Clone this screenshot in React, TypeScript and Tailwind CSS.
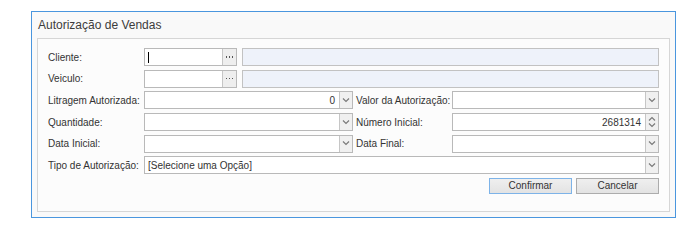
import React from "react";

const font = { fontFamily: '"Liberation Sans", Arial, sans-serif' };

function Chevron({ up = false }: { up?: boolean }) {
  return (
    <svg width="8" height="5" viewBox="0 0 8 5" className="block">
      <polyline
        points={up ? "1,4.5 4,1.5 7,4.5" : "1,0.5 4,3.5 7,0.5"}
        fill="none"
        stroke="#7a7a7a"
        strokeWidth="1.2"
      />
    </svg>
  );
}

function Combo({ value, className = "" }: { value?: string; className?: string }) {
  return (
    <div className={`flex h-[18px] border border-[#b9b9b9] bg-white ${className}`}>
      <div className="flex flex-1 items-center justify-end pr-[4px] text-[10px] text-[#333]">
        {value}
      </div>
      <div className="flex w-[13px] items-center justify-center border-l border-[#c6c6c6] bg-[#f0f0f0]">
        <Chevron />
      </div>
    </div>
  );
}

function Lookup({ cursor = false }: { cursor?: boolean }) {
  return (
    <div className="flex flex-1 gap-[5px]">
      <div className="flex h-[18px] w-[93px] border border-[#b9b9b9] bg-white">
        <div className="flex flex-1 items-center pl-[3px]">
          {cursor && <div className="h-[11px] w-px bg-black" />}
        </div>
        <div className="flex w-[14px] items-center justify-center gap-[1.5px] border-l border-[#c6c6c6] bg-[#eeeeee]">
          <div className="h-[1.5px] w-[1.5px] bg-[#555]" />
          <div className="h-[1.5px] w-[1.5px] bg-[#555]" />
          <div className="h-[1.5px] w-[1.5px] bg-[#555]" />
        </div>
      </div>
      <div className="h-[18px] flex-1 border border-[#c2c2c2] bg-[#eef2fa]" />
    </div>
  );
}

function Label({ children, w = "w-[96px]" }: { children: React.ReactNode; w?: string }) {
  return (
    <div className={`flex h-[18px] shrink-0 items-center text-[10px] text-[#333] ${w}`}>
      {children}
    </div>
  );
}

export default function App() {
  return (
    <div className="h-[251px] w-[700px] bg-white pl-[31px] pt-[11px]" style={font}>
      <div className="flex h-[207px] w-[645px] flex-col border border-[#4a96de] bg-[#f9f9f9] px-[5px] pb-[5px]">
        <div className="flex h-[26px] shrink-0 items-center pl-[1px] text-[12px] text-[#3c3c3c]">
          Autorização de Vendas
        </div>
        <div className="flex flex-1 flex-col gap-[3.7px] border border-[#d6d6d6] bg-[#fcfcfc] pl-[10px] pr-[10px] pt-[9px]">
          <div className="flex">
            <Label>Cliente:</Label>
            <Lookup cursor />
          </div>
          <div className="flex">
            <Label>Veiculo:</Label>
            <Lookup />
          </div>
          <div className="flex">
            <Label>Litragem Autorizada:</Label>
            <Combo value="0" className="w-[209px]" />
            <Label w="w-[99px] pl-[3px]">Valor da Autorização:</Label>
            <Combo className="flex-1" />
          </div>
          <div className="flex">
            <Label>Quantidade:</Label>
            <Combo className="w-[209px]" />
            <Label w="w-[99px] pl-[3px]">Número Inicial:</Label>
            <div className="flex h-[18px] flex-1 border border-[#b9b9b9] bg-white">
              <div className="flex flex-1 items-center justify-end pr-[4px] text-[10px] text-[#333]">
                2681314
              </div>
              <div className="flex w-[13px] flex-col items-center justify-center gap-[2px] border-l border-[#c6c6c6] bg-[#f0f0f0]">
                <Chevron up />
                <Chevron />
              </div>
            </div>
          </div>
          <div className="flex">
            <Label>Data Inicial:</Label>
            <Combo className="w-[209px]" />
            <Label w="w-[99px] pl-[3px]">Data Final:</Label>
            <Combo className="flex-1" />
          </div>
          <div className="flex">
            <Label>Tipo de Autorização:</Label>
            <div className="flex h-[18px] flex-1 border border-[#b9b9b9] bg-white">
              <div className="flex flex-1 items-center pl-[3px] text-[10px] text-[#333]">
                [Selecione uma Opção]
              </div>
              <div className="flex w-[13px] items-center justify-center border-l border-[#c6c6c6] bg-[#f0f0f0]">
                <Chevron />
              </div>
            </div>
          </div>
          <div className="flex justify-end gap-[4px]">
            <button className="h-[16px] w-[83px] border border-[#7db3e8] bg-gradient-to-b from-[#efefef] to-[#e3e3e3] text-[10px] leading-none text-[#333]">
              Confirmar
            </button>
            <button className="h-[16px] w-[83px] border border-[#acacac] bg-gradient-to-b from-[#efefef] to-[#e3e3e3] text-[10px] leading-none text-[#333]">
              Cancelar
            </button>
          </div>
        </div>
      </div>
    </div>
  );
}
